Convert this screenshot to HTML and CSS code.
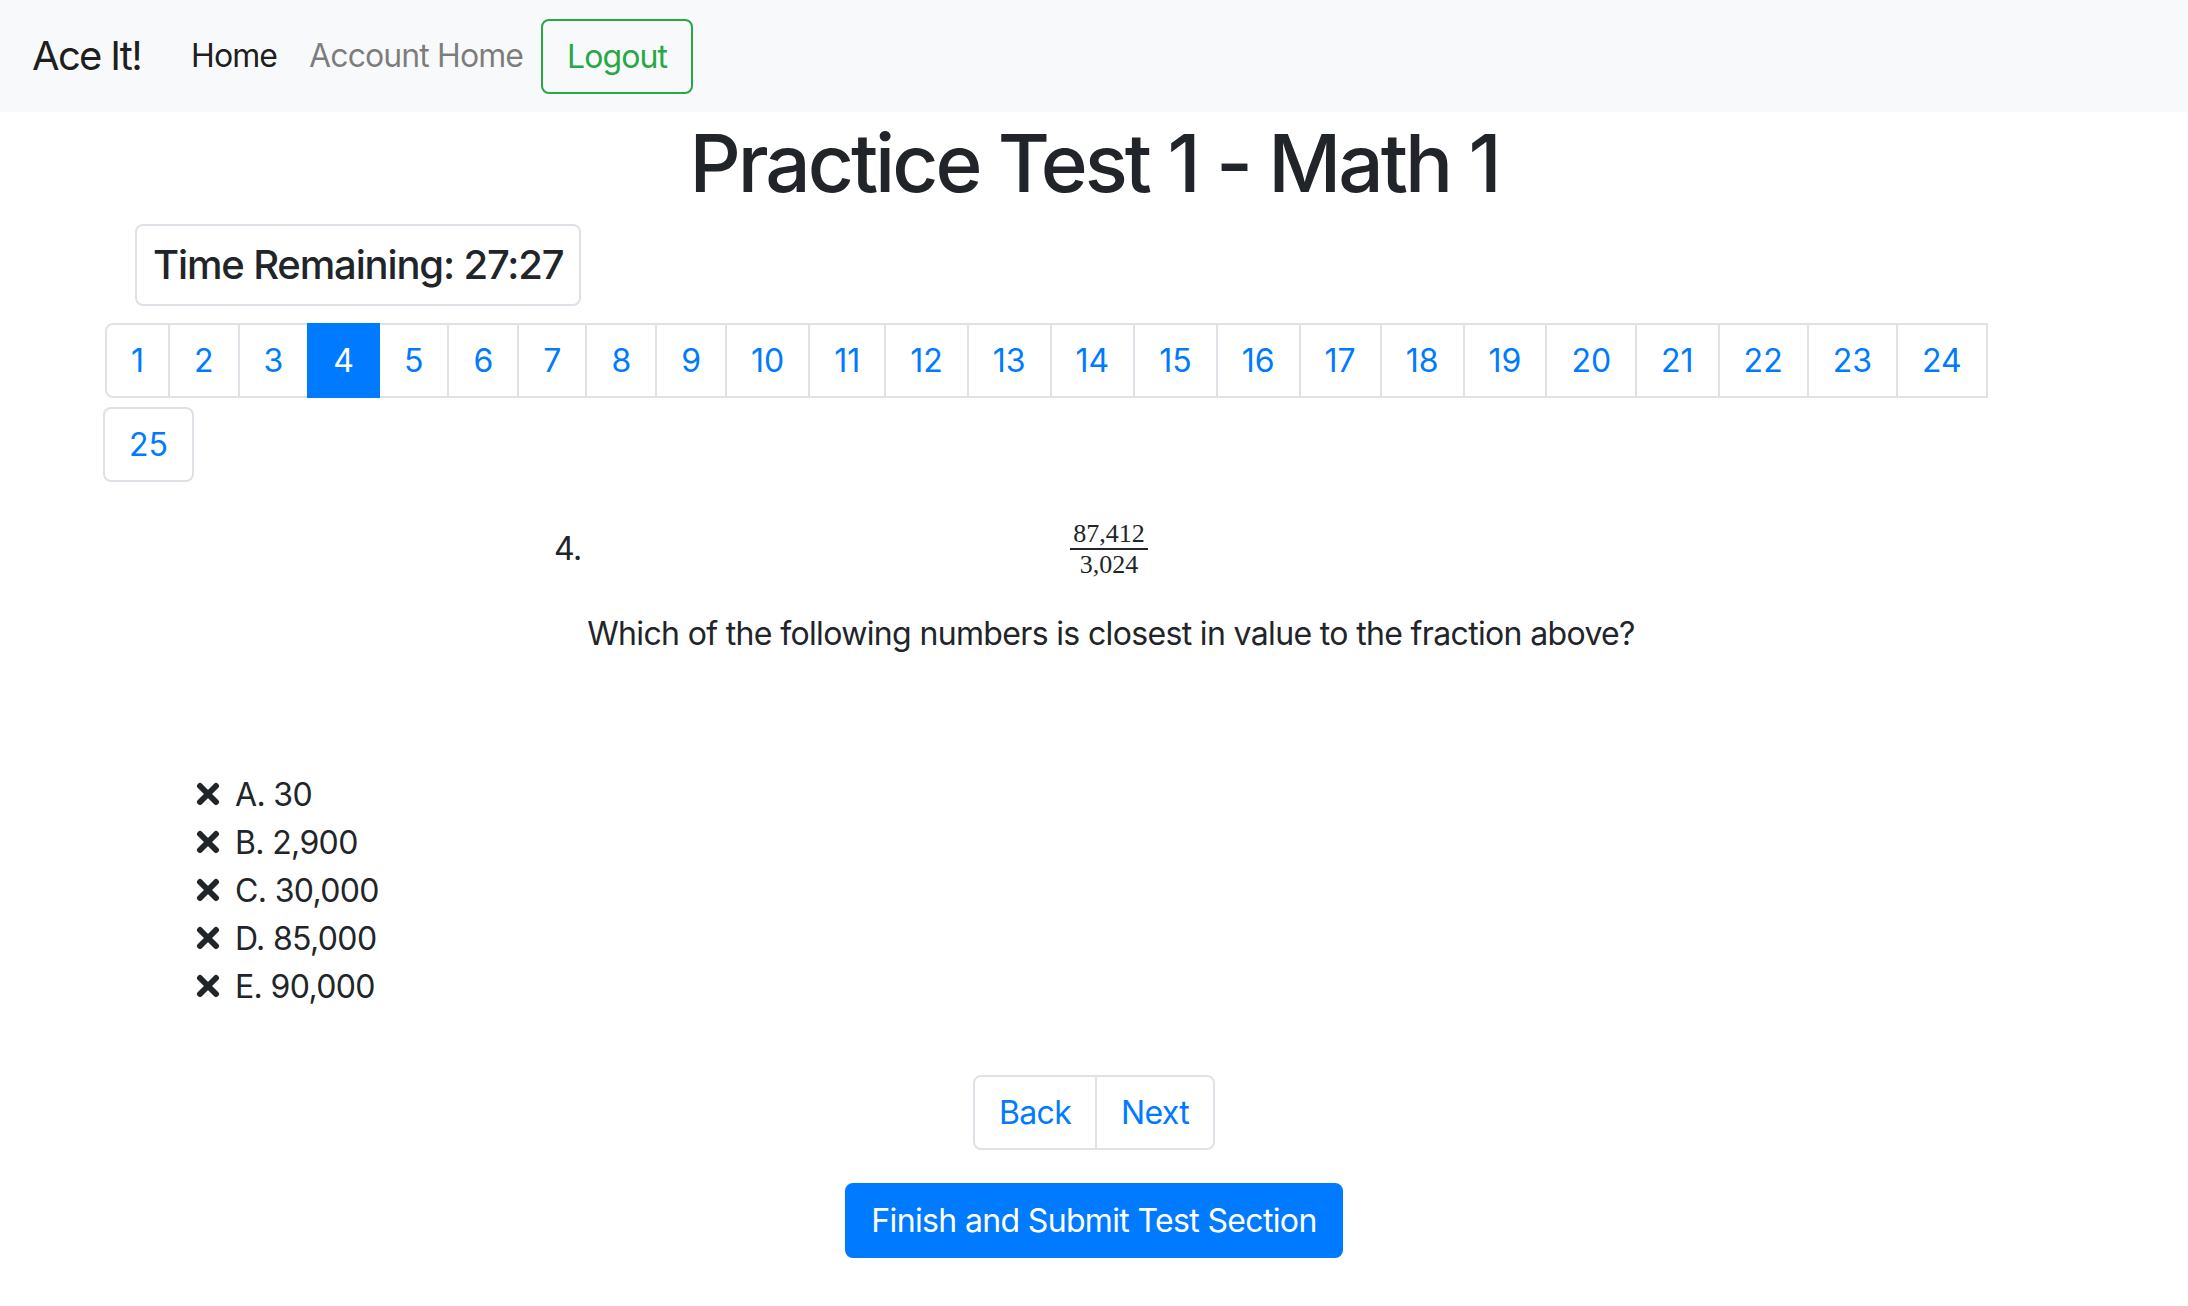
FILE: index.html
```html
<!DOCTYPE html>
<html lang="en">
<head>
<meta charset="utf-8">
<title>Ace It! - Practice Test 1 - Math 1</title>
<link rel="stylesheet" href="styles.css">
</head>
<body>
<nav class="navbar">
  <a class="brand" href="#">Ace It!</a>
  <ul class="nav">
    <li><a class="nav-link active" href="#">Home</a></li>
    <li><a class="nav-link" href="#">Account Home</a></li>
  </ul>
  <button class="btn btn-outline-success" type="button">Logout</button>
</nav>
<main class="main">
  <h1 class="title">Practice Test 1 - Math 1</h1>
  <div class="content">
    <div class="timer-row">
      <div class="timer">Time Remaining: 27:27</div>
    </div>
    <ul class="pagination">
      <li class="page-item first"><a class="page-link" href="#">1</a></li>
      <li class="page-item"><a class="page-link" href="#">2</a></li>
      <li class="page-item"><a class="page-link" href="#">3</a></li>
      <li class="page-item active"><a class="page-link" href="#">4</a></li>
      <li class="page-item"><a class="page-link" href="#">5</a></li>
      <li class="page-item"><a class="page-link" href="#">6</a></li>
      <li class="page-item"><a class="page-link" href="#">7</a></li>
      <li class="page-item"><a class="page-link" href="#">8</a></li>
      <li class="page-item"><a class="page-link" href="#">9</a></li>
      <li class="page-item"><a class="page-link" href="#">10</a></li>
      <li class="page-item"><a class="page-link" href="#">11</a></li>
      <li class="page-item"><a class="page-link" href="#">12</a></li>
      <li class="page-item"><a class="page-link" href="#">13</a></li>
      <li class="page-item"><a class="page-link" href="#">14</a></li>
      <li class="page-item"><a class="page-link" href="#">15</a></li>
      <li class="page-item"><a class="page-link" href="#">16</a></li>
      <li class="page-item"><a class="page-link" href="#">17</a></li>
      <li class="page-item"><a class="page-link" href="#">18</a></li>
      <li class="page-item"><a class="page-link" href="#">19</a></li>
      <li class="page-item"><a class="page-link" href="#">20</a></li>
      <li class="page-item"><a class="page-link" href="#">21</a></li>
      <li class="page-item"><a class="page-link" href="#">22</a></li>
      <li class="page-item"><a class="page-link" href="#">23</a></li>
      <li class="page-item"><a class="page-link" href="#">24</a></li>
      <li class="page-break" aria-hidden="true"></li>
      <li class="page-item last"><a class="page-link" href="#">25</a></li>
    </ul>

    <section class="question">
      <div class="q-head">
        <span class="q-num">4.</span>
        <span class="frac">
          <span class="frac-num">87,412</span>
          <span class="frac-den">3,024</span>
        </span>
        <span class="q-spacer"></span>
      </div>
      <p class="q-text">Which of the following numbers is closest in value to the fraction above?</p>
    </section>

    <ul class="answers">
      <li class="answer"><svg class="x-icon" viewBox="0 0 24 24" aria-hidden="true"><path d="M4 4 L20 20 M20 4 L4 20"/></svg><span>A. 30</span></li>
      <li class="answer"><svg class="x-icon" viewBox="0 0 24 24" aria-hidden="true"><path d="M4 4 L20 20 M20 4 L4 20"/></svg><span>B. 2,900</span></li>
      <li class="answer"><svg class="x-icon" viewBox="0 0 24 24" aria-hidden="true"><path d="M4 4 L20 20 M20 4 L4 20"/></svg><span>C. 30,000</span></li>
      <li class="answer"><svg class="x-icon" viewBox="0 0 24 24" aria-hidden="true"><path d="M4 4 L20 20 M20 4 L4 20"/></svg><span>D. 85,000</span></li>
      <li class="answer"><svg class="x-icon" viewBox="0 0 24 24" aria-hidden="true"><path d="M4 4 L20 20 M20 4 L4 20"/></svg><span>E. 90,000</span></li>
    </ul>

    <div class="nav-buttons">
      <div class="btn-group">
        <a class="group-link first" href="#">Back</a>
        <a class="group-link last" href="#">Next</a>
      </div>
    </div>
    <div class="submit-row">
      <button class="btn btn-primary" type="button">Finish and Submit Test Section</button>
    </div>
  </div>
</main>
</body>
</html>
```
FILE: styles.css
```css
* { box-sizing: border-box; }

html, body {
  margin: 0;
  padding: 0;
  background: #fff;
}

body {
  font-family: Inter, "Noto Sans", "Liberation Sans", sans-serif;
  font-size: 32px;
  line-height: 1.5;
  color: #212529;
  letter-spacing: -0.65px;
}

a { text-decoration: none; }

/* Navbar */
.navbar {
  display: flex;
  align-items: center;
  height: 112px;
  padding: 0 32px;
  background: #f8f9fa;
}

.brand {
  font-size: 40px;
  line-height: 60px;
  color: rgba(0, 0, 0, 0.9);
  margin-right: 34px;
  letter-spacing: -1.7px;
}

.nav {
  display: flex;
  list-style: none;
  margin: 0;
  padding: 0;
  letter-spacing: -0.9px;
}

.nav-link {
  display: block;
  padding: 16px 16px;
  color: rgba(0, 0, 0, 0.5);
  line-height: 48px;
}

.nav-link.active { color: rgba(0, 0, 0, 0.9); }

.btn {
  font-family: inherit;
  font-size: 32px;
  letter-spacing: -0.65px;
  line-height: 47px;
  padding: 12px 24px;
  border: 2px solid transparent;
  border-radius: 8px;
  cursor: pointer;
}

.btn-outline-success {
  color: #28a745;
  border-color: #28a745;
  background: transparent;
  margin-left: 2px;
  letter-spacing: -0.9px;
}

.btn-primary {
  color: #fff;
  background: #007bff;
  border-color: #007bff;
}

/* Main */
.title {
  margin: 0 0 13px;
  padding-top: 3px;
  text-align: center;
  font-size: 80px;
  font-weight: 500;
  line-height: 96px;
  letter-spacing: -3px;
}

.content {
  padding: 0 105px;
}

.timer-row {
  padding-left: 30px;
}

.timer {
  display: inline-block;
  font-size: 40px;
  font-weight: 500;
  line-height: 48px;
  padding: 15px 16px;
  border: 2px solid #dee2e6;
  border-radius: 8px;
  letter-spacing: -1.15px;
}

.pagination {
  display: flex;
  flex-wrap: wrap;
  list-style: none;
  margin: 17px 0 0;
  padding: 0;
  letter-spacing: 0;
}

.page-item { display: block; }

.page-item + .page-item { margin-left: -2px; }

.page-link {
  display: block;
  padding: 16px 24px;
  line-height: 39px;
  color: #007bff;
  background: #fff;
  border: 2px solid #dee2e6;
}

.page-item.first .page-link {
  border-top-left-radius: 8px;
  border-bottom-left-radius: 8px;
}

.page-item.active .page-link {
  background: #007bff;
  border-color: #007bff;
  color: #fff;
  position: relative;
}

.page-break {
  flex-basis: 100%;
  height: 0;
}

.page-item.last {
  margin-top: 9px;
  margin-left: -2px;
}

.page-item.last .page-link { border-radius: 8px; }

/* Question */
.question {
  margin: 37px 0 0 449px;
  width: 1114px;
}

.q-head {
  display: grid;
  grid-template-columns: 1fr auto 1fr;
  align-items: center;
}

.q-num { justify-self: start; line-height: 48px; }

.frac {
  display: inline-flex;
  flex-direction: column;
  align-items: center;
  font-family: "Liberation Serif", "DejaVu Serif", serif;
  font-size: 26px;
  letter-spacing: 0;
  line-height: 29px;
  padding: 0 4px;
  margin-right: 4px;
}

.frac-num {
  display: block;
  padding: 0 3px;
}

.frac-den {
  display: block;
  border-top: 2px solid #212529;
  align-self: stretch;
  text-align: center;
}

.q-text {
  margin: 31px 0 0;
  text-align: center;
  line-height: 48px;
}

/* Answers */
.answers {
  list-style: none;
  margin: 113px 0 0;
  padding: 0 0 0 91px;
}

.answer {
  display: flex;
  align-items: center;
  line-height: 48px;
}

.x-icon {
  width: 24px;
  height: 24px;
  margin-right: 15px;
  margin-top: -2px;
  fill: none;
  stroke: #212529;
  stroke-width: 6;
  stroke-linecap: round;
}

/* Buttons */
.nav-buttons {
  display: flex;
  justify-content: center;
  margin-top: 64px;
}

.btn-group { display: flex; }

.group-link {
  display: block;
  padding: 12px 24px;
  line-height: 47px;
  color: #007bff;
  background: #fff;
  border: 2px solid #dee2e6;
}

.group-link.first { border-radius: 8px 0 0 8px; }
.group-link.last { border-radius: 0 8px 8px 0; margin-left: -2px; }

.submit-row {
  display: flex;
  justify-content: center;
  margin-top: 33px;
}
```
